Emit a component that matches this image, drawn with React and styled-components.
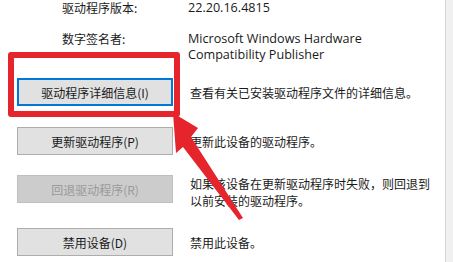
import React from "react";
import styled, { createGlobalStyle } from "styled-components";

const GlobalStyle = createGlobalStyle`
  html, body {
    margin: 0;
    padding: 0;
    background: #f0f0f0;
  }
  body {
    font-family: "Microsoft YaHei", "Noto Sans CJK SC", "Noto Sans", sans-serif;
    font-size: 12px;
    color: #1a1a1a;
    overflow: hidden;
  }
`;

const Page = styled.div`
  position: relative;
  width: 453px;
  height: 262px;
  overflow: hidden;
  background: #f0f0f0;
`;

const Panel = styled.div`
  width: 446px;
  height: 262px;
  box-sizing: border-box;
  background: #ffffff;
  border-right: 1px solid #d4d4d4;
  display: flex;
  flex-direction: column;
`;

const InfoList = styled.div`
  display: flex;
  flex-direction: column;
  gap: 15px;
  padding-left: 62px;
  line-height: 16px;
`;

const InfoRow = styled.div`
  display: flex;
`;

const Label = styled.div`
  width: 126px;
  flex-shrink: 0;
`;

const Value = styled.div`
  font-family: "Segoe UI", "Open Sans", "Noto Sans", sans-serif;
  font-size: 12.6px;
  line-height: 16px;
`;

const Actions = styled.div`
  display: flex;
  flex-direction: column;
  padding-left: 17px;
  margin-top: 15px;
`;

const ActionRow = styled.div`
  position: relative;
  display: flex;
  align-items: flex-start;
  gap: 17px;
  margin-top: ${(p) => p.$gap || 0}px;
`;

const Button = styled.div`
  width: 156px;
  height: 28px;
  box-sizing: border-box;
  flex-shrink: 0;
  display: flex;
  align-items: center;
  justify-content: center;
  background: ${(p) => (p.$disabled ? "#cccccc" : "#e1e1e1")};
  border: ${(p) =>
    p.$focused ? "2px solid #0078d7" : p.$disabled ? "1px solid #bfbfbf" : "1px solid #adadad"};
  color: ${(p) => (p.$disabled ? "#9a9a9a" : "#1a1a1a")};
  font-size: 12px;
`;

const Description = styled.div`
  line-height: 17px;
  padding-top: ${(p) => (p.$multi ? 0 : 6)}px;
  width: 240px;
`;

const Highlight = styled.div`
  position: absolute;
  left: -9px;
  top: -26px;
  width: 172px;
  height: 65px;
  box-sizing: border-box;
  border: 6px solid #e5242b;
  border-radius: 3px;
  pointer-events: none;
`;

const Overlay = styled.svg`
  position: absolute;
  left: 0;
  top: 0;
  pointer-events: none;
`;

const actions = [
  { label: "驱动程序详细信息(I)", desc: "查看有关已安装驱动程序文件的详细信息。", focused: true, gap: 0 },
  { label: "更新驱动程序(P)", desc: "更新此设备的驱动程序。", gap: 21 },
  {
    label: "回退驱动程序(R)",
    desc: "如果该设备在更新驱动程序时失败，则回退到以前安装的驱动程序。",
    disabled: true,
    multi: true,
    gap: 20,
  },
  { label: "禁用设备(D)", desc: "禁用此设备。", gap: 19 },
];

export default function App() {
  return (
    <Page>
      <GlobalStyle />
      <Panel>
        <InfoList>
          <InfoRow>
            <Label>驱动程序版本:</Label>
            <Value>22.20.16.4815</Value>
          </InfoRow>
          <InfoRow>
            <Label>数字签名者:</Label>
            <Value>
              Microsoft Windows Hardware
              <br />
              Compatibility Publisher
            </Value>
          </InfoRow>
        </InfoList>
        <Actions>
          {actions.map((a) => (
            <ActionRow key={a.label} $gap={a.gap}>
              {a.focused && <Highlight />}
              <Button $focused={a.focused} $disabled={a.disabled}>
                {a.label}
              </Button>
              <Description $multi={a.multi}>{a.desc}</Description>
            </ActionRow>
          ))}
        </Actions>
      </Panel>
      <Overlay width="453" height="262" viewBox="0 0 453 262">
        <polygon
          points="173,113 198,128 191,137 243,218 239,220 183,147 176,153"
          fill="#e5242b"
        />
      </Overlay>
    </Page>
  );
}
